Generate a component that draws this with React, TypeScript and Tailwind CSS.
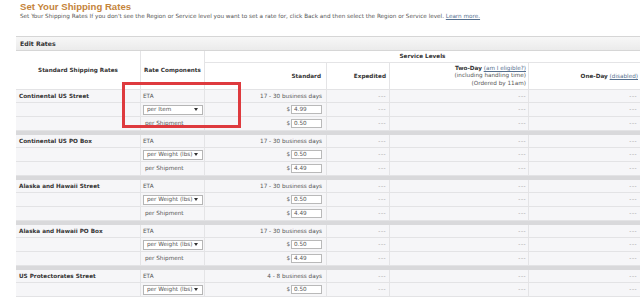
import React from 'react';

const cols = 'grid grid-cols-[125px_64px_122px_63px_139px_111px]';

const groups = [
  { name: 'Continental US Street', eta: '17 - 30 business days', unit: 'per Item', a: '4.99', b: '0.50' },
  { name: 'Continental US PO Box', eta: '17 - 30 business days', unit: 'per Weight (lbs)', a: '0.50', b: '4.49' },
  { name: 'Alaska and Hawaii Street', eta: '17 - 30 business days', unit: 'per Weight (lbs)', a: '0.50', b: '4.49' },
  { name: 'Alaska and Hawaii PO Box', eta: '17 - 30 business days', unit: 'per Weight (lbs)', a: '0.50', b: '4.49' },
  { name: 'US Protectorates Street', eta: '4 - 8 business days', unit: 'per Weight (lbs)', a: '0.50', b: '4.49' }
];

const cell = 'flex items-center border-r border-[#e4e4e6] min-w-0';

const Dashes = () => <span className="text-[#9a9a9a] tracking-[0.5px]">---</span>;

const Price = ({ value }: { value: string }) => (
  <div className="flex items-center gap-[1px]">
    <span className="text-[#666]">$</span>
    <div className="w-[31px] h-[9px] bg-white border border-[#b9b9b9] flex items-center pl-[2px] leading-none text-[#555]">
      {value}
    </div>
  </div>
);

const Select = ({ label }: { label: string }) => (
  <div className="w-[60px] h-[10px] bg-white border border-[#b5b5b5] flex items-center justify-between px-[3px] leading-none text-[#555]">
    <span>{label}</span>
    <span className="w-0 h-0 border-l-[2px] border-r-[2px] border-t-[3px] border-l-transparent border-r-transparent border-t-[#333] mr-[1px]" />
  </div>
);

const Row = ({
  h,
  label,
  comp,
  standard
}: {
  h: string;
  label?: string;
  comp: React.ReactNode;
  standard: React.ReactNode;
}) => (
  <div className={`${cols} ${h} bg-[#f6f6f8] border-b border-[#e3e3e5]`}>
    <div className={`${cell} pl-[3px] font-bold text-[#333]`}>{label}</div>
    <div className={`${cell} pl-[2px] text-[#555]`}>{comp}</div>
    <div className={`${cell} justify-end pr-[4px] text-[#555]`}>{standard}</div>
    <div className={`${cell} justify-end pr-[3px]`}>
      <Dashes />
    </div>
    <div className={`${cell} justify-end pr-[2px]`}>
      <Dashes />
    </div>
    <div className="flex items-center justify-end pr-[3px]">
      <Dashes />
    </div>
  </div>
);

export default function App() {
  return (
    <div className="relative w-[640px] h-[297px] overflow-hidden bg-white font-['DejaVu_Sans',sans-serif] text-[5.7px] leading-[7px] text-[#444]">
      <div className="pl-[20px] pt-[1px]">
        <h1 className="font-['Liberation_Sans',Arial,sans-serif] font-bold text-[9.6px] leading-[11px] text-[#c5843a]">
          Set Your Shipping Rates
        </h1>
        <p className="mt-[1px] text-[#555]">
          Set Your Shipping Rates If you don't see the Region or Service level you want to set a rate for, click Back and
          then select the Region or Service level.{' '}
          <span className="underline text-[#56708f]">Learn more.</span>
        </p>
      </div>

      <div className="ml-[16px] mt-[16px]">
        <div className="h-[15px] flex items-center pl-[4px] border-t border-b border-[#d6d6d6] bg-gradient-to-b from-[#f7f7f7] to-[#ebebeb] font-bold text-[6.2px] text-[#333]">
          Edit Rates
        </div>

        <div className={`${cols} grid-rows-[12px_26px] bg-white border-b border-[#e3e3e5]`}>
          <div className="row-span-2 flex items-center justify-center border-r border-[#e4e4e6] font-bold text-[#333]">
            Standard Shipping Rates
          </div>
          <div className="row-span-2 flex items-center justify-center border-r border-[#e4e4e6] font-bold text-[#333]">
            Rate Components
          </div>
          <div className="col-span-4 flex items-center justify-center border-b border-[#e4e4e6] font-bold text-[#333]">
            Service Levels
          </div>
          <div className={`${cell} justify-end pr-[5px] font-bold text-[#333]`}>Standard</div>
          <div className={`${cell} justify-end pr-[3px] font-bold text-[#333]`}>Expedited</div>
          <div className={`${cell} flex-col items-end justify-center pr-[2px] leading-[7.5px] text-[#555]`}>
            <span>
              <span className="font-bold text-[#333]">Two-Day</span>{' '}
              <span className="underline text-[#56708f]">(am I eligible?)</span>
            </span>
            <span>(including handling time)</span>
            <span>(Ordered by 11am)</span>
          </div>
          <div className="flex items-center justify-end pr-[2px]">
            <span>
              <span className="font-bold text-[#333]">One-Day</span>{' '}
              <span className="underline text-[#56708f]">(disabled)</span>
            </span>
          </div>
        </div>

        {groups.map((g) => (
          <div key={g.name}>
            <Row h="h-[13px]" label={g.name} comp="ETA" standard={g.eta} />
            <Row h="h-[14px]" comp={<Select label={g.unit} />} standard={<Price value={g.a} />} />
            <Row h="h-[14px]" comp={<span className="pl-[2px]">per Shipment</span>} standard={<Price value={g.b} />} />
            <div className="h-[4px] bg-[#d9d9db]" />
          </div>
        ))}
      </div>

      {/* highlight box */}
      <div className="absolute left-[122px] top-[82px] w-[119px] h-[46px] border-[3px] border-[#de3a3e]" />
    </div>
  );
}
